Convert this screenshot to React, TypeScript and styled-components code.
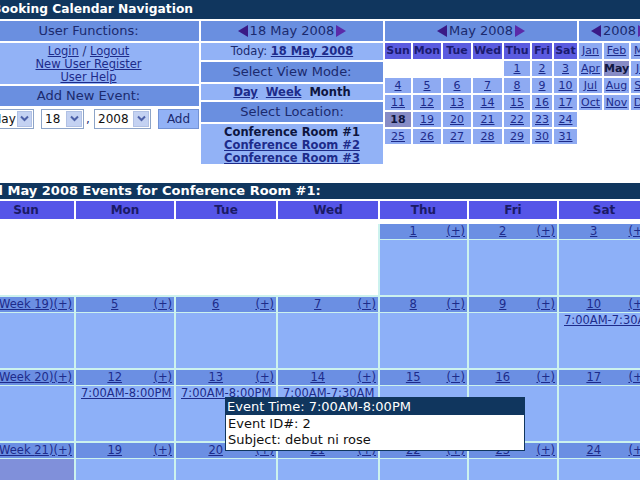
import React from 'react';
import styled, { createGlobalStyle } from 'styled-components';

const C = {
  navy: '#10365e',
  head: '#6a8fe0',
  body: '#92b2f6',
  text: '#1b2a6e',
  link: '#1d2b8a',
  miniHead: '#5b5be0',
  miniCell: '#8eaaf2',
  today: '#878cc6',
  mainHead: '#5555e8',
  strip: '#6b8fe3',
  cell: '#8db0f8',
  todayCell: '#8090da',
  line: '#ccf2ee',
};

const GlobalStyle = createGlobalStyle`
  html, body {
    margin: 0;
    padding: 0;
    background: #fff;
    overflow: hidden;
  }
  body {
    font-family: "DejaVu Sans", Verdana, sans-serif;
    width: 640px;
    height: 480px;
  }
`;

const Page = styled.div`
  position: relative;
  width: 640px;
  height: 480px;
  overflow: hidden;
`;

const Shift = styled.div`
  margin-left: -22px;
  width: 700px;
`;

const TitleBar = styled.div<{ $indent: number; $h: number; $size: number }>`
  height: ${(p) => p.$h}px;
  line-height: ${(p) => p.$h}px;
  background: ${C.navy};
  color: #fff;
  font-weight: bold;
  font-size: ${(p) => p.$size}px;
  padding-left: ${(p) => p.$indent}px;
  white-space: nowrap;
`;

const TopRow = styled.div`
  display: flex;
  gap: 2px;
  align-items: flex-start;
  margin-top: 2px;
`;

const Panel = styled.div<{ $w: number }>`
  width: ${(p) => p.$w}px;
  flex: none;
  display: flex;
  flex-direction: column;
  gap: 2px;
`;

const PanelHead = styled.div`
  height: 20px;
  line-height: 20px;
  background: ${C.head};
  color: ${C.text};
  font-size: 13px;
  text-align: center;
  white-space: nowrap;
  display: flex;
  align-items: center;
  justify-content: center;
`;

const InfoRow = styled.div<{ $h: number; $bold?: boolean }>`
  height: ${(p) => p.$h}px;
  line-height: ${(p) => p.$h}px;
  background: ${C.body};
  color: ${C.text};
  font-size: 11.5px;
  font-weight: ${(p) => (p.$bold ? 'bold' : 'normal')};
  text-align: center;
  white-space: nowrap;
  display: flex;
  justify-content: center;
  gap: 8px;
`;

const LinkBlock = styled.div<{ $h: number; $bold?: boolean }>`
  height: ${(p) => p.$h}px;
  box-sizing: border-box;
  padding-top: 2px;
  background: ${C.body};
  color: ${C.text};
  font-size: 11.5px;
  line-height: 13px;
  font-weight: ${(p) => (p.$bold ? 'bold' : 'normal')};
  text-align: center;
  display: flex;
  flex-direction: column;
  align-items: center;
  white-space: nowrap;
`;

const Link = styled.a<{ $bold?: boolean }>`
  color: ${C.link};
  text-decoration: underline;
  font-weight: ${(p) => (p.$bold ? 'bold' : 'inherit')};
  cursor: pointer;
`;

const Plain = styled.span`
  color: #0d1540;
`;

const AddRow = styled.div`
  height: 21px;
  display: flex;
  align-items: center;
  padding-left: 9px;
  font-size: 12px;
  color: ${C.text};
`;

const FakeSelect = styled.div<{ $w: number; $gap: number }>`
  width: ${(p) => p.$w}px;
  margin-right: ${(p) => p.$gap}px;
  height: 20px;
  box-sizing: border-box;
  border: 1px solid #8da4c8;
  background: #fff;
  display: flex;
  align-items: stretch;
  justify-content: space-between;
  flex: none;
`;

const SelectValue = styled.span`
  padding-left: 3px;
  line-height: 18px;
  font-size: 12px;
  color: #111;
`;

const SelectArrow = styled.span`
  width: 16px;
  margin: 1px;
  background: #c4d2f2;
  border: 1px solid #b1c1e4;
  box-sizing: border-box;
  display: flex;
  align-items: center;
  justify-content: center;
`;

const Comma = styled.span`
  width: 5px;
  margin-right: 3px;
  font-size: 12px;
`;

const AddButton = styled.button`
  width: 41px;
  height: 20px;
  padding: 0;
  background: ${C.body};
  border: 1px solid #7393d6;
  color: ${C.text};
  font-family: inherit;
  font-size: 12px;
`;

const MiniGrid = styled.div<{ $cols: string }>`
  display: grid;
  grid-template-columns: ${(p) => p.$cols};
  grid-template-rows: 16px;
  grid-auto-rows: 15px;
  gap: 2px;
`;

const MiniHead = styled.div`
  background: ${C.miniHead};
  color: #1b1b70;
  font-size: 11px;
  font-weight: bold;
  line-height: 16px;
  text-align: center;
`;

const MiniCell = styled.div<{ $today?: boolean; $empty?: boolean }>`
  background: ${(p) => (p.$empty ? 'transparent' : p.$today ? C.today : C.miniCell)};
  font-size: 11px;
  line-height: 15px;
  text-align: center;
  font-weight: ${(p) => (p.$today ? 'bold' : 'normal')};
  color: #10163f;
`;

const CalSection = styled.div`
  margin-top: 19px;
`;

const MAIN_COLS = '96px 98px 100px 100px 87px 88px 90px';

const DayHeaderRow = styled.div`
  display: grid;
  grid-template-columns: ${MAIN_COLS};
  column-gap: 2px;
  margin-top: 2px;
  height: 18px;
`;

const DayHeaderCell = styled.div`
  background: ${C.mainHead};
  color: #1a1a66;
  font-size: 12px;
  font-weight: bold;
  line-height: 18px;
  text-align: center;
`;

const WeekGrid = styled.div`
  display: grid;
  grid-template-columns: ${MAIN_COLS};
  gap: 2px;
  margin-top: 5px;
  background: ${C.line};
`;

const EmptySpan = styled.div<{ $span: number }>`
  grid-column: span ${(p) => p.$span};
  background: #fff;
`;

const DayCell = styled.div`
  display: flex;
  flex-direction: column;
  min-width: 0;
`;

const DateStrip = styled.div<{ $week?: boolean }>`
  height: 15px;
  background: ${C.strip};
  border-bottom: 1px solid ${C.line};
  display: flex;
  justify-content: ${(p) => (p.$week ? 'flex-end' : 'space-between')};
  font-size: 11.5px;
  line-height: 15px;
  padding-right: 2px;
  white-space: nowrap;
`;

const DateNum = styled.span`
  flex: 1;
  text-align: center;
`;

const CellBody = styled.div<{ $today?: boolean }>`
  height: 55px;
  box-sizing: border-box;
  padding: 1px 5px;
  background: ${(p) => (p.$today ? C.todayCell : C.cell)};
  font-size: 11.5px;
  line-height: 13px;
  white-space: nowrap;
  overflow: hidden;
`;

const Tooltip = styled.div`
  position: absolute;
  left: 225px;
  top: 397px;
  width: 300px;
  box-sizing: border-box;
  border: 1px solid ${C.navy};
  background: #fff;
  font-size: 13px;
  color: #111;
`;

const TooltipHead = styled.div`
  background: ${C.navy};
  color: #fff;
  height: 17px;
  line-height: 17px;
  padding-left: 1px;
`;

const TooltipBody = styled.div`
  padding: 1px 2px 2px;
  line-height: 16px;
`;

const Arrow = ({ dir }: { dir: 'l' | 'r' }) => (
  <svg width="11" height="12" viewBox="0 0 11 12" style={{ margin: '0 1px' }}>
    {dir === 'l' ? (
      <polygon points="10,0 10,12 0,6" fill="#3a1a86" />
    ) : (
      <polygon points="1,0 11,6 1,12" fill="#5b2aa8" />
    )}
  </svg>
);

const Chevron = () => (
  <svg width="9" height="7" viewBox="0 0 9 7">
    <polyline points="1,1.5 4.5,5 8,1.5" fill="none" stroke="#4d61a8" strokeWidth="2" />
  </svg>
);

const miniDays = ['Sun', 'Mon', 'Tue', 'Wed', 'Thu', 'Fri', 'Sat'];
const miniDates: (number | null)[] = [
  null, null, null, null,
  ...Array.from({ length: 31 }, (_, i) => i + 1),
];
const months = ['Jan', 'Feb', 'Mar', 'Apr', 'May', 'Jun', 'Jul', 'Aug', 'Sep', 'Oct', 'Nov', 'Dec'];

type Day = { d: number; events?: string[] };
type Week = { label?: number; days: (Day | null)[]; sunToday?: boolean };

const weeks: Week[] = [
  { days: [null, null, null, null, { d: 1 }, { d: 2 }, { d: 3 }] },
  {
    label: 19,
    days: [null, { d: 5 }, { d: 6 }, { d: 7 }, { d: 8 }, { d: 9 }, { d: 10, events: ['7:00AM-7:30AM'] }],
  },
  {
    label: 20,
    days: [
      null,
      { d: 12, events: ['7:00AM-8:00PM'] },
      { d: 13, events: ['7:00AM-8:00PM'] },
      { d: 14, events: ['7:00AM-7:30AM'] },
      { d: 15 },
      { d: 16 },
      { d: 17 },
    ],
  },
  {
    label: 21,
    sunToday: true,
    days: [null, { d: 19 }, { d: 20 }, { d: 21 }, { d: 22 }, { d: 23 }, { d: 24 }],
  },
];

const App = () => {
  return (
    <Page>
      <GlobalStyle />
      <Shift>
        <TitleBar $indent={14} $h={19} $size={12.25}>Booking Calendar Navigation</TitleBar>
        <TopRow>
          <Panel $w={221}>
            <PanelHead>User Functions:</PanelHead>
            <LinkBlock $h={41}>
              <span>
                <Link>Login</Link> / <Link>Logout</Link>
              </span>
              <Link>New User Register</Link>
              <Link>User Help</Link>
            </LinkBlock>
            <PanelHead>Add New Event:</PanelHead>
            <AddRow>
              <FakeSelect $w={47} $gap={7}>
                <SelectValue>May</SelectValue>
                <SelectArrow><Chevron /></SelectArrow>
              </FakeSelect>
              <FakeSelect $w={43} $gap={2}>
                <SelectValue>18</SelectValue>
                <SelectArrow><Chevron /></SelectArrow>
              </FakeSelect>
              <Comma>,</Comma>
              <FakeSelect $w={57} $gap={7}>
                <SelectValue>2008</SelectValue>
                <SelectArrow><Chevron /></SelectArrow>
              </FakeSelect>
              <AddButton>Add</AddButton>
            </AddRow>
          </Panel>

          <Panel $w={182}>
            <PanelHead>
              <Arrow dir="l" />18 May 2008<Arrow dir="r" />
            </PanelHead>
            <InfoRow $h={17}>
              <span>
                Today: <Link $bold>18 May 2008</Link>
              </span>
            </InfoRow>
            <PanelHead>Select View Mode:</PanelHead>
            <InfoRow $h={16} $bold>
              <Link>Day</Link>
              <Link>Week</Link>
              <Plain>Month</Plain>
            </InfoRow>
            <PanelHead>Select Location:</PanelHead>
            <LinkBlock $h={40} $bold>
              <Plain>Conference Room #1</Plain>
              <Link>Conference Room #2</Link>
              <Link>Conference Room #3</Link>
            </LinkBlock>
          </Panel>

          <Panel $w={192}>
            <PanelHead>
              <Arrow dir="l" />May 2008<Arrow dir="r" />
            </PanelHead>
            <MiniGrid $cols="26px 28px 28px 29px 26px 20px 23px">
              {miniDays.map((d) => (
                <MiniHead key={d}>{d}</MiniHead>
              ))}
              {miniDates.map((d, i) =>
                d === null ? (
                  <MiniCell key={`e${i}`} $empty />
                ) : d === 18 ? (
                  <MiniCell key={d} $today>18</MiniCell>
                ) : (
                  <MiniCell key={d}>
                    <Link>{d}</Link>
                  </MiniCell>
                )
              )}
            </MiniGrid>
          </Panel>

          <Panel $w={81}>
            <PanelHead>
              <Arrow dir="l" />2008<Arrow dir="r" />
            </PanelHead>
            <MiniGrid $cols="23px 25px 27px">
              {months.map((m) =>
                m === 'May' ? (
                  <MiniCell key={m} $today>May</MiniCell>
                ) : (
                  <MiniCell key={m}>
                    <Link>{m}</Link>
                  </MiniCell>
                )
              )}
            </MiniGrid>
          </Panel>
        </TopRow>

        <CalSection>
          <TitleBar $indent={6} $h={16} $size={13}>
            All May 2008 Events for Conference Room #1:
          </TitleBar>
          <DayHeaderRow>
            {miniDays.map((d) => (
              <DayHeaderCell key={d}>{d}</DayHeaderCell>
            ))}
          </DayHeaderRow>
          <WeekGrid>
            {weeks.map((w, wi) => {
              const cells: React.ReactNode[] = [];
              if (wi === 0) {
                cells.push(<EmptySpan key="empty" $span={4} />);
              } else {
                cells.push(
                  <DayCell key={`sun${wi}`}>
                    <DateStrip $week>
                      <Link>(Week {w.label})</Link>
                      <Link>(+)</Link>
                    </DateStrip>
                    <CellBody $today={w.sunToday} />
                  </DayCell>
                );
              }
              w.days.forEach((day, di) => {
                if (!day) return;
                cells.push(
                  <DayCell key={`${wi}-${di}`}>
                    <DateStrip>
                      <DateNum>
                        <Link>{day.d}</Link>
                      </DateNum>
                      <Link>(+)</Link>
                    </DateStrip>
                    <CellBody>
                      {day.events?.map((e) => (
                        <div key={e}>
                          <Link>{e}</Link>
                        </div>
                      ))}
                    </CellBody>
                  </DayCell>
                );
              });
              return cells;
            })}
          </WeekGrid>
        </CalSection>
      </Shift>

      <Tooltip>
        <TooltipHead>Event Time: 7:00AM-8:00PM</TooltipHead>
        <TooltipBody>
          <div>Event ID#: 2</div>
          <div>Subject: debut ni rose</div>
        </TooltipBody>
      </Tooltip>
    </Page>
  );
};

export default App;
